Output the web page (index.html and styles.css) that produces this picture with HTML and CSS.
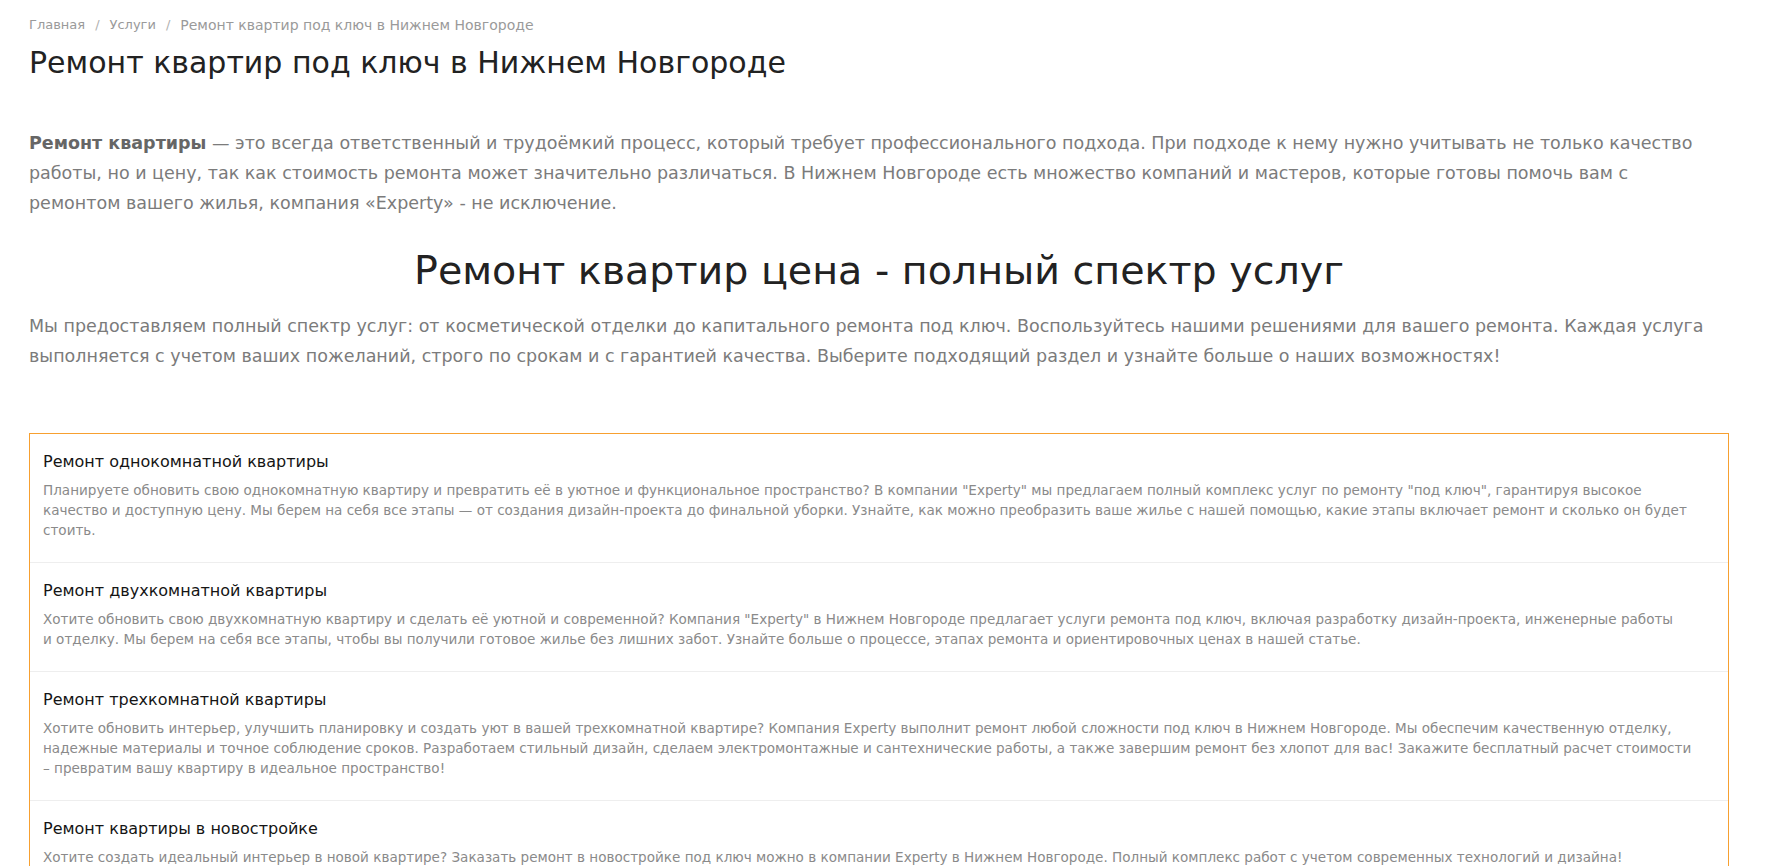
FILE: index.html
```html
<!DOCTYPE html>
<html lang="ru">
<head>
<meta charset="utf-8">
<title>Ремонт квартир под ключ в Нижнем Новгороде</title>
<link rel="stylesheet" href="styles.css">
</head>
<body>
<div class="page">
  <nav class="crumbs">
    <a href="#">Главная</a><span class="sep">/</span><a href="#">Услуги</a><span class="sep">/</span><span class="cur">Ремонт квартир под ключ в Нижнем Новгороде</span>
  </nav>
  <h1 class="title">Ремонт квартир под ключ в Нижнем Новгороде</h1>
  <p class="lead lead1"><b>Ремонт квартиры</b> — это всегда ответственный и трудоёмкий процесс, который требует профессионального подхода. При подходе к нему нужно учитывать не только качество работы, но и цену, так как стоимость ремонта может значительно различаться. В Нижнем Новгороде есть множество компаний и мастеров, которые готовы помочь вам с ремонтом вашего жилья, компания «Experty» - не исключение.</p>
  <h2 class="subtitle">Ремонт квартир цена - полный спектр услуг</h2>
  <p class="lead lead2">Мы предоставляем полный спектр услуг: от косметической отделки до капитального ремонта под ключ. Воспользуйтесь нашими решениями для вашего ремонта. Каждая услуга выполняется с учетом ваших пожеланий, строго по срокам и с гарантией качества. Выберите подходящий раздел и узнайте больше о наших возможностях!</p>
  <div class="list">
    <div class="item">
      <div class="item-title">Ремонт однокомнатной квартиры</div>
      <div class="item-text">Планируете обновить свою однокомнатную квартиру и превратить её в уютное и функциональное пространство? В компании "Experty" мы предлагаем полный комплекс услуг по ремонту "под ключ", гарантируя высокое качество и доступную цену. Мы берем на себя все этапы — от создания дизайн-проекта до финальной уборки. Узнайте, как можно преобразить ваше жилье с нашей помощью, какие этапы включает ремонт и сколько он будет стоить.</div>
    </div>
    <div class="item">
      <div class="item-title">Ремонт двухкомнатной квартиры</div>
      <div class="item-text">Хотите обновить свою двухкомнатную квартиру и сделать её уютной и современной? Компания "Experty" в Нижнем Новгороде предлагает услуги ремонта под ключ, включая разработку дизайн-проекта, инженерные работы <span class="nowrap">и отделку.</span> Мы берем на себя все этапы, чтобы вы получили готовое жилье без лишних забот. Узнайте больше о процессе, этапах ремонта и ориентировочных ценах в нашей статье.</div>
    </div>
    <div class="item">
      <div class="item-title">Ремонт трехкомнатной квартиры</div>
      <div class="item-text">Хотите обновить интерьер, улучшить планировку и создать уют в вашей трехкомнатной квартире? Компания Experty выполнит ремонт любой сложности под ключ в Нижнем Новгороде. Мы обеспечим качественную отделку, надежные материалы и точное соблюдение сроков. Разработаем стильный дизайн, сделаем электромонтажные и сантехнические работы, а также завершим ремонт без хлопот для вас! Закажите бесплатный расчет стоимости <span class="nowrap">– превратим</span> вашу квартиру в идеальное пространство!</div>
    </div>
    <div class="item">
      <div class="item-title">Ремонт квартиры в новостройке</div>
      <div class="item-text">Хотите создать идеальный интерьер в новой квартире? Заказать ремонт в новостройке под ключ можно в компании Experty в Нижнем Новгороде. Полный комплекс работ с учетом современных технологий и дизайна!</div>
    </div>
  </div>
</div>
</body>
</html>
```
FILE: styles.css
```css
html, body {
  margin: 0;
  padding: 0;
  background: #fff;
}
body {
  font-family: "DejaVu Sans", "Noto Sans", sans-serif;
  overflow: hidden;
}
.page {
  width: 1700px;
  margin-left: 29px;
}
.crumbs {
  padding-top: 15px;
  font-size: 13px;
  line-height: 20px;
  color: #9a9a9a;
  display: flex;
  align-items: center;
}
.crumbs a {
  color: #9a9a9a;
  text-decoration: none;
}
.crumbs .sep {
  margin: 0 10px;
  color: #b0b0b0;
}
.crumbs .cur {
  font-size: 14px;
  color: #9a9a9a;
}
.title {
  margin: 10px 0 0;
  font-size: 30px;
  line-height: 36px;
  font-weight: normal;
  color: #222;
}
.lead {
  margin: 47px 0 0;
  font-size: 17.5px;
  line-height: 30px;
  color: #7b7b7b;
}
.lead1 {
  padding-right: 15px;
}
.lead b {
  color: #666;
  font-weight: bold;
}
.subtitle {
  margin: 28px 0 0;
  text-align: center;
  font-size: 39.6px;
  line-height: 48px;
  font-weight: normal;
  color: #222;
}
.lead2 {
  margin-top: 17px;
}
.list {
  margin-top: 62px;
  border: 1px solid #f7a030;
  border-bottom: none;
}
.item {
  padding: 17px 23px 22px 13px;
  border-bottom: 1px solid #eeeeee;
}
.item-title {
  font-size: 16px;
  line-height: 22px;
  color: #151515;
}
.item-text {
  margin-top: 7px;
  font-size: 13.55px;
  line-height: 20px;
  color: #8a8a8a;
}
.nowrap {
  white-space: nowrap;
}
```
